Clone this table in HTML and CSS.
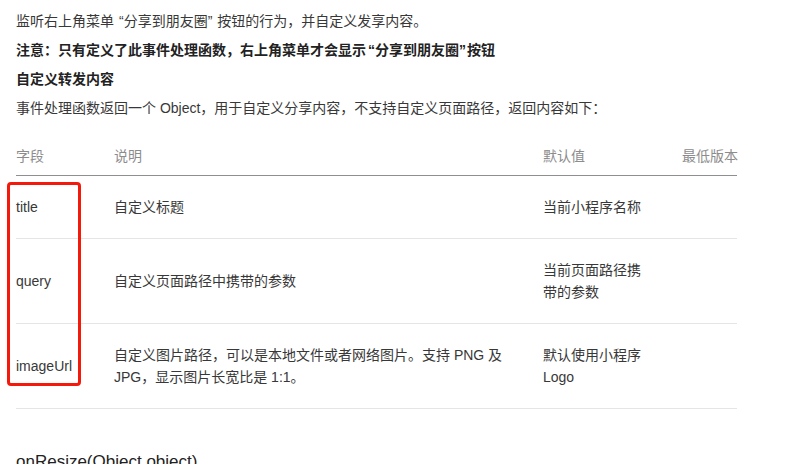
FILE: index.html
```html
<!DOCTYPE html>
<html lang="zh-CN">
<head>
    <meta charset="UTF-8">
    <title>onShareTimeline</title>
    <link rel="stylesheet" href="styles.css">
</head>
<body>
    <div class="doc">
        <p>监听右上角菜单<span class="q-open">“</span>分享到朋友圈<span class="q-close">”</span>按钮的行为，并自定义发享内容。</p>
        <p class="strong">注意：只有定义了此事件处理函数，右上角菜单才会显示<span class="q-open">“</span>分享到朋友圈<span class="q-close">”</span>按钮</p>
        <p class="strong">自定义转发内容</p>
        <p>事件处理函数返回一个 Object，用于自定义分享内容，不支持自定义页面路径，返回内容如下：</p>

        <div class="table-wrap">
            <table>
                <thead>
                    <tr>
                        <th class="col-field">字段</th>
                        <th class="col-desc">说明</th>
                        <th class="col-default">默认值</th>
                        <th class="col-version">最低版本</th>
                    </tr>
                </thead>
                <tbody>
                    <tr>
                        <td>title</td>
                        <td>自定义标题</td>
                        <td>当前小程序名称</td>
                        <td></td>
                    </tr>
                    <tr>
                        <td>query</td>
                        <td>自定义页面路径中携带的参数</td>
                        <td>当前页面路径携带的参数</td>
                        <td></td>
                    </tr>
                    <tr>
                        <td>imageUrl</td>
                        <td>自定义图片路径，可以是本地文件或者网络图片。支持 PNG 及 JPG，显示图片长宽比是 1:1。</td>
                        <td>默认使用小程序 Logo</td>
                        <td></td>
                    </tr>
                </tbody>
            </table>
            <!-- 标注框 -->
            <div class="mark"></div>
        </div>

        <h3>onResize(Object object)</h3>
    </div>
</body>
</html>
```

FILE: styles.css
```css
* {
    margin: 0;
    padding: 0;
    box-sizing: border-box;
}

body {
    font-family: "Liberation Sans", "Noto Sans CJK SC", sans-serif;
    font-size: 14px;
    color: #383838;
    background: #fff;
}

.doc {
    padding: 10px 16px 0 16px;
}

.doc p {
    line-height: 22px;
    margin-bottom: 7px;
}

.doc p.strong {
    font-weight: bold;
    color: #222;
}

/* 中文引号稍宽 */
.q-open {
    margin-left: 5px;
}

.q-close {
    margin-right: 5px;
}

.strong .q-open {
    margin-left: 2px;
}

.strong .q-close {
    margin-right: 1px;
}

.table-wrap {
    position: relative;
    width: 721px;
    margin-top: 17px;
}

table {
    width: 100%;
    border-collapse: collapse;
    table-layout: fixed;
}

th, td {
    text-align: left;
    line-height: 22px;
    vertical-align: middle;
    padding-right: 30px;
}

th {
    font-weight: normal;
    color: #8c8c8c;
    padding-top: 9px;
    padding-bottom: 8px;
    border-bottom: 1px solid #8f8f8f;
}

td {
    padding-top: 20px;
    padding-bottom: 20px;
    border-bottom: 1px solid #e5e5e5;
}

th.col-field { width: 98px; }
th.col-desc { width: 429px; }
th.col-default { width: 139px; }
th.col-version { width: 55px; padding-right: 0; white-space: nowrap; }

.mark {
    position: absolute;
    left: -9px;
    top: 46px;
    width: 74px;
    height: 204px;
    border: 3px solid #f5190c;
    border-radius: 4px;
}

h3 {
    font-size: 17px;
    font-weight: normal;
    line-height: 24px;
    margin-top: 41px;
    color: #222;
}
```
